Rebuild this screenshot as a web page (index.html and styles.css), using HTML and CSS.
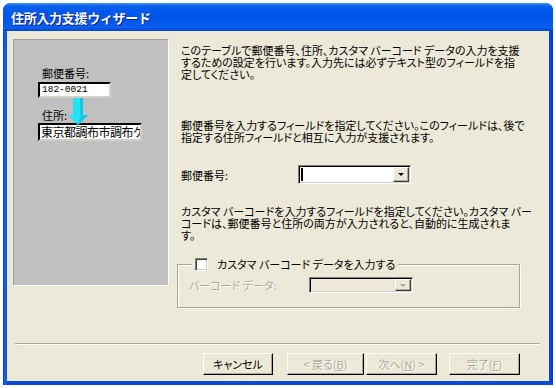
FILE: index.html
```html
<!DOCTYPE html>
<html lang="ja">
<head>
<meta charset="UTF-8">
<title>住所入力支援ウィザード</title>
<link rel="stylesheet" href="styles.css">
</head>
<body>
  <div class="window">
    <div class="titlebar"><span class="title">住所入力支援ウィザード</span></div>
    <div class="client">
      <div class="main">
        <div class="preview">
          <div class="p-label">郵便番号:</div>
          <div class="p-box zip">182-0021</div>
          <div class="p-label addr-label">住所:</div>
          <div class="p-box addr">東京都調布市調布ケ丘</div>
          <svg class="arrow" width="20" height="28" viewBox="0 0 20 28">
            <polygon points="5,0 15,0 15,17 20,17 10,27 0,17 5,17" fill="#22e4f6"/>
            <polygon points="12,0 15,0 15,17 20,17 10,27 13,17 12,17" fill="#18c6e8"/>
          </svg>
        </div>
        <div class="content">
          <p class="intro">このテーブルで郵便番号、住所、カスタマ バーコード データの入力を支援<br>するための設定を行います。入力先には必ずテキスト型のフィールドを指<br>定してください。</p>
          <p class="desc">郵便番号を入力するフィールドを指定してください。このフィールドは、後で<br>指定する住所フィールドと相互に入力が支援されます。</p>
          <div class="field-row">
            <span class="field-label">郵便番号:</span>
            <div class="combo"><span class="caret"></span><span class="drop"><i class="tri"></i></span></div>
          </div>
          <p class="desc3">カスタマ バーコードを入力するフィールドを指定してください。カスタマ バー<br>コードは、郵便番号と住所の両方が入力されると、自動的に生成されま<br>す。</p>
          <fieldset class="group">
            <legend><span class="check"></span>カスタマ バーコード データを入力する</legend>
            <div class="field-row disabled">
              <span class="field-label">バーコード データ:</span>
              <div class="combo"><span class="drop"><i class="tri"></i></span></div>
            </div>
          </fieldset>
        </div>
      </div>
      <div class="sep"></div>
      <div class="buttons">
        <button class="btn cancel">キャンセル</button>
        <button class="btn back" disabled>&lt; 戻る(<u>B</u>)</button>
        <button class="btn next" disabled>次へ(<u>N</u>) &gt;</button>
        <button class="btn finish" disabled>完了(<u>F</u>)</button>
      </div>
    </div>
  </div>
</body>
</html>
```

FILE: styles.css
```css
body {
  margin: 0;
  background: #fff;
  font-family: "Noto Sans CJK JP", sans-serif;
  font-size: 11px;
  color: #000;
}
.window {
  margin: 3px 0 0 3px;
  width: 550px;
  height: 382px;
  display: flex;
  flex-direction: column;
  background: linear-gradient(90deg, #0831d9 0, #166aee 2px, #0a4ddb 4px, #0a4ddb 546px, #0831d9 550px);
  border-radius: 8px 8px 0 0;
}
.titlebar {
  height: 28px;
  border-radius: 7px 7px 0 0;
  background: linear-gradient(#3d95ff 0, #0a62ea 3px, #0058ee 8px, #0055e8 60%, #0a5ff0 88%, #0043cf 100%);
  display: flex;
  align-items: center;
  padding-left: 8px;
}
.title {
  color: #fff;
  font-weight: bold;
  font-size: 13px;
  letter-spacing: -0.3px;
  text-shadow: 1px 1px #0a1e8c;
}
.client {
  flex: 1;
  margin: 0 4px 4px 4px;
  background: #ece9d8;
  display: flex;
  flex-direction: column;
}
.main {
  display: flex;
  box-sizing: border-box;
  height: 312px;
  padding: 8px 0 0 6px;
}

/* left preview picture */
.preview {
  position: relative;
  flex: 0 0 156px;
  height: 247px;
  box-sizing: border-box;
  background: #c0c0c0;
  border: 1px solid;
  border-color: #a0a0a0 #fff #fff #a0a0a0;
  padding: 27px 0 0 24px;
}
.p-label {
  font-size: 11px;
  line-height: 12px;
  margin-left: 4px;
}
.addr-label {
  margin-top: 11px;
}
.p-box {
  box-sizing: border-box;
  background: #fff;
  border: 2px solid;
  border-color: #000 #d4d0c8 #d4d0c8 #000;
  white-space: nowrap;
  overflow: hidden;
}
.zip {
  margin-top: 3px;
  width: 73px;
  height: 16px;
  padding-left: 2px;
  font-family: "Liberation Mono", monospace;
  font-size: 9.5px;
  line-height: 12px;
}
.addr {
  margin-top: 2px;
  width: 104px;
  height: 18px;
  padding-left: 1px;
  font-size: 12px;
  letter-spacing: -0.5px;
  line-height: 14px;
}
.arrow {
  position: absolute;
  left: 54px;
  top: 58px;
}

/* right side */
.content {
  margin-left: 12px;
  flex: 1;
}
.content p {
  margin: 0;
  line-height: 12px;
  white-space: nowrap;
  font-feature-settings: "palt";
}
.intro {
  padding-top: 5px;
}
.content .desc {
  margin-top: 39px;
}
.content .desc3 {
  margin-top: 21px;
}
.field-row {
  display: flex;
  align-items: center;
  margin-top: 22px;
}
.field-label {
  width: 117px;
  font-feature-settings: "palt";
}
.combo {
  width: 113px;
  height: 19px;
  box-sizing: border-box;
  border: 1px solid;
  border-color: #808080 #fff #fff #808080;
  box-shadow: inset 1px 1px #000, inset -1px -1px #d4d0c8;
  background: #fff;
  display: flex;
  justify-content: flex-end;
  padding: 1px;
}
.caret {
  width: 2px;
  height: 13px;
  margin: 1px auto 0 1px;
  background: #000;
}
.drop {
  width: 16px;
  box-sizing: border-box;
  background: #ece9d8;
  border: 1px solid;
  border-color: #fff #404040 #404040 #fff;
  box-shadow: inset -1px -1px #aca899;
  display: flex;
  align-items: center;
  justify-content: center;
}
.tri {
  width: 0;
  height: 0;
  border-left: 3px solid transparent;
  border-right: 3px solid transparent;
  border-top: 3px solid #000;
  margin-left: -1px;
}

/* group box */
.group {
  margin: 17px 0 0 -4px;
  width: 343px;
  height: 50px;
  box-sizing: border-box;
  border: 1px solid #aca899;
  box-shadow: 1px 1px 0 #fff, inset 1px 1px 0 #fff;
  padding: 0 0 0 14px;
}
.group legend {
  display: flex;
  align-items: center;
  gap: 9px;
  padding: 0 3px;
  line-height: 13px;
  background: #ece9d8;
  font-feature-settings: "palt";
}
.check {
  width: 13px;
  height: 13px;
  box-sizing: border-box;
  background: #fff;
  border: 1px solid;
  border-color: #808080 #fff #fff #808080;
  box-shadow: inset 1px 1px #404040, inset -1px -1px #d4d0c8;
}
.field-row.disabled {
  margin: 6px 0 0 -3px;
}
.disabled .field-label {
  width: 120px;
  color: #aca899;
  text-shadow: 1px 1px #fff;
}
.disabled .combo {
  width: 104px;
  height: 16px;
  background: #ece9d8;
}
.disabled .tri {
  border-top-color: #aca899;
}

/* bottom */
.sep {
  margin: 0 9px 0 8px;
  height: 1px;
  background: #aca899;
  border-bottom: 1px solid #fff;
}
.buttons {
  display: flex;
  margin-top: 8px;
  padding-left: 196px;
}
.btn {
  height: 22px;
  width: 70px;
  box-sizing: border-box;
  padding: 0;
  margin: 0;
  font-family: inherit;
  font-size: 11px;
  color: #000;
  background: #ece9d8;
  border: 1px solid;
  border-color: #fff #000 #000 #fff;
  box-shadow: inset -1px -1px #aca899;
  border-radius: 0;
  font-feature-settings: "palt";
}
.btn:disabled {
  color: #aca899;
  text-shadow: 1px 1px #fff;
}
.btn u {
  text-decoration-thickness: 1px;
}
.back {
  margin-left: 14px;
  width: 77px;
}
.next {
  margin-left: 2px;
  width: 71px;
}
.finish {
  margin-left: 12px;
  width: 71px;
}
```
